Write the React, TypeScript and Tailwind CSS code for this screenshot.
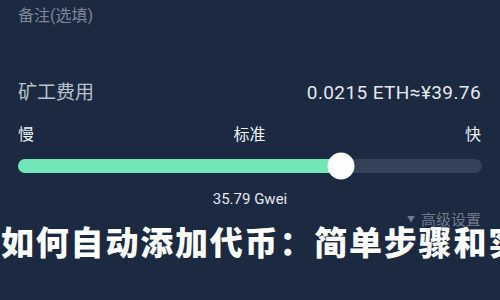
import React from "react";

export default function App() {
  const pct = 69.7;
  return (
    <div
      className="relative w-[500px] h-[300px] overflow-hidden bg-[#1b2941]"
      style={{ fontFamily: 'Roboto, "Noto Sans CJK SC", sans-serif' }}
    >
      <div className="px-[18px]">
        <div className="pt-[5px] text-[16px] leading-[22px] text-[#7d8799]">备注(选填)</div>
        <div className="mt-[54px] flex items-center justify-between">
          <span className="text-[19px] leading-[24px] text-[#b9c1cd]">矿工费用</span>
          <span className="text-[19px] leading-[24px] tracking-[0.4px] text-[#e4e8ef] pr-[1px]">0.0215 ETH≈¥39.76</span>
        </div>
        <div className="mt-[20px] flex items-center justify-between text-[16px] leading-[20px] text-[#eef1f5]">
          <span>慢</span>
          <span>标准</span>
          <span className="pr-[1px]">快</span>
        </div>
        <div className="relative mt-[14px] h-[14px] rounded-full bg-[#344159]">
          <div className="h-full rounded-full bg-[#70e6b6]" style={{ width: `${pct}%` }} />
          <div
            className="absolute top-1/2 h-[27px] w-[27px] -translate-x-1/2 -translate-y-1/2 rounded-full bg-white"
            style={{ left: `${pct}%` }}
          />
        </div>
        <div className="mt-[17px] text-center text-[15px] leading-[18px] text-[#e4e8ef]">35.79 Gwei</div>
        <div className="mt-[2px] flex items-center justify-end gap-[6px] text-[15px] leading-[20px] text-[#6f7a8d] pr-[1px]">
          <span className="text-[8px]">▼</span>
          <span>高级设置</span>
        </div>
      </div>
      <div
        className="absolute left-[1px] top-[219px] whitespace-nowrap text-[33px] leading-[44px] font-black text-white tracking-[1.8px]"
        style={{ fontFamily: '"Noto Sans CJK SC", sans-serif' }}
      >
        如何自动添加代币：简单步骤和实用技巧
      </div>
    </div>
  );
}
